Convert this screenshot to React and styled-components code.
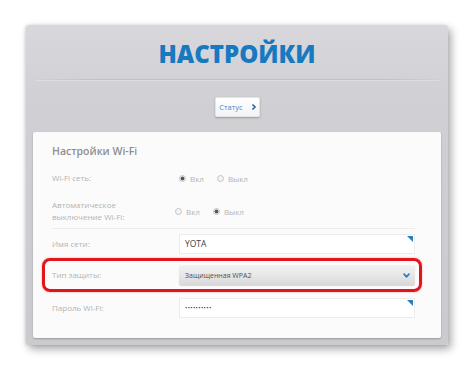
import React from "react";
import styled, { createGlobalStyle } from "styled-components";

const GlobalStyle = createGlobalStyle`
  * { box-sizing: border-box; }
  body {
    margin: 0;
    background: #ffffff;
    font-family: "Open Sans", "Liberation Sans", sans-serif;
  }
`;

const Page = styled.div`
  width: 474px;
  height: 373px;
  padding: 25px 0 0 26px;
`;

const Panel = styled.div`
  width: 422px;
  height: 320px;
  border-radius: 3px 3px 2px 2px;
  background: linear-gradient(180deg, #d8d8dc 0%, #d0d0d4 25%, #cbcbcf 100%);
  box-shadow: 3px 4px 8px rgba(0, 0, 0, 0.35), -1px 0 3px rgba(0, 0, 0, 0.12);
  display: flex;
  flex-direction: column;
  padding: 0 7px 7px 7px;
`;

const Header = styled.div`
  height: 54px;
  display: flex;
  align-items: center;
  justify-content: center;
  padding-top: 2px;
`;

const Title = styled.h1`
  margin: 0;
  font-family: "Open Sans", sans-serif;
  font-weight: 800;
  font-size: 24px;
  letter-spacing: 0;
  color: #1779c0;
`;

const Divider = styled.div`
  height: 2px;
  margin: 0 2px;
  background: linear-gradient(
    90deg,
    rgba(185, 185, 190, 0.1),
    #bfbfc4 15%,
    #bfbfc4 85%,
    rgba(185, 185, 190, 0.1)
  );
  border-bottom: 1px solid #dddde1;
`;

const Nav = styled.div`
  display: flex;
  justify-content: center;
  padding: 16px 0 15px 0;
`;

const StatusButton = styled.button`
  width: 45px;
  height: 20px;
  display: flex;
  align-items: center;
  justify-content: center;
  gap: 8px;
  padding: 0 0 0 2px;
  background: linear-gradient(180deg, #ffffff, #f3f3f5);
  border: 1px solid #e4e4e8;
  border-radius: 2px;
  box-shadow: 0 1px 2px rgba(0, 0, 0, 0.25);
  font-family: "Open Sans", sans-serif;
  font-size: 7.5px;
  color: #4f86bd;
`;

const Card = styled.div`
  flex: 1;
  background: #fbfbfb;
  border-radius: 2px;
  box-shadow: 0 1px 2px rgba(0, 0, 0, 0.25);
  padding: 8px 26px 14px 19px;
  display: flex;
  flex-direction: column;
`;

const CardTitle = styled.h2`
  margin: 0;
  height: 22px;
  line-height: 22px;
  font-size: 10.5px;
  font-weight: 600;
  color: #8e8e8e;
`;

const Row = styled.div`
  height: ${(p) => p.h}px;
  display: flex;
  align-items: center;
  border-bottom: ${(p) => (p.divided ? "1px solid #ececec" : "none")};
`;

const MarkedRow = styled.div`
  height: 34px;
  display: flex;
  align-items: center;
  margin: 0 -7px 0 -10px;
  padding: 0 4px 0 7px;
  border: 3px solid #e3141b;
  border-radius: 8px;
  box-shadow: 0 0 2px rgba(200, 0, 0, 0.4);
`;

const Label = styled.div`
  width: 127px;
  flex-shrink: 0;
  font-size: 8px;
  line-height: 12px;
  color: #b3b3b3;
`;

const RadioGroup = styled.div`
  display: flex;
  align-items: center;
  gap: 13px;
  margin-left: ${(p) => p.shift || 0}px;
`;

const RadioOption = styled.label`
  display: flex;
  align-items: center;
  gap: 4px;
  font-size: 8px;
  color: #b3b3b3;
`;

const RadioDot = styled.span`
  width: 7px;
  height: 7px;
  border-radius: 50%;
  border: 1px solid #c4c4c4;
  background: ${(p) =>
    p.checked
      ? "radial-gradient(circle, #555 0, #555 1.6px, #e9e9e9 2.2px)"
      : "#f4f4f4"};
`;

const Field = styled.div`
  position: relative;
  width: 236px;
  height: 20px;
  display: flex;
  align-items: center;
  padding-left: 5px;
  background: #ffffff;
  border: 1px solid #ececec;
  font-size: 8.5px;
  color: #3e3e3e;
`;

const Corner = styled.span`
  position: absolute;
  top: 1px;
  right: 1px;
  width: 0;
  height: 0;
  border-top: 6px solid #2d7fb3;
  border-left: 6px solid transparent;
`;

const Select = styled.div`
  width: 236px;
  height: 20px;
  display: flex;
  align-items: center;
  justify-content: space-between;
  padding: 0 5px 0 6px;
  background: linear-gradient(180deg, #f2f2f2 0%, #e6e6e6 55%, #d9d9d9 100%);
  border-radius: 2px;
  box-shadow: 0 1px 1px rgba(0, 0, 0, 0.15);
  font-size: 7px;
  color: #505050;
`;

const Dots = styled.span`
  font-size: 6px;
  letter-spacing: 0.4px;
  color: #333;
`;

const Radio = ({ checked, children }) => (
  <RadioOption>
    <RadioDot checked={checked} />
    {children}
  </RadioOption>
);

const Chevron = ({ color, size = 6, down }) => (
  <svg
    width={size}
    height={size}
    viewBox="0 0 10 10"
    style={{ transform: down ? "rotate(90deg)" : "none" }}
  >
    <path
      d="M3 1.5 L7 5 L3 8.5"
      fill="none"
      stroke={color}
      strokeWidth="2.4"
      strokeLinecap="round"
      strokeLinejoin="round"
    />
  </svg>
);

const App = () => {
  return (
    <Page>
      <GlobalStyle />
      <Panel>
        <Header>
          <Title>НАСТРОЙКИ</Title>
        </Header>
        <Divider />
        <Nav>
          <StatusButton>
            Статус
            <Chevron color="#25609a" size={6} />
          </StatusButton>
        </Nav>
        <Card>
          <CardTitle>Настройки Wi-Fi</CardTitle>
          <Row h={32}>
            <Label>Wi-Fi сеть:</Label>
            <RadioGroup shift={0}>
              <Radio checked>Вкл</Radio>
              <Radio>Выкл</Radio>
            </RadioGroup>
          </Row>
          <Row h={35} divided>
            <Label>
              Автоматическое
              <br />
              выключение Wi-Fi:
            </Label>
            <RadioGroup shift={-4}>
              <Radio>Вкл</Radio>
              <Radio checked>Выкл</Radio>
            </RadioGroup>
          </Row>
          <Row h={29}>
            <Label>Имя сети:</Label>
            <Field>
              YOTA
              <Corner />
            </Field>
          </Row>
          <MarkedRow>
            <Label>Тип защиты:</Label>
            <Select>
              Защищенная WPA2
              <Chevron color="#2a7fc0" size={7} down />
            </Select>
          </MarkedRow>
          <Row h={32}>
            <Label>Пароль Wi-Fi:</Label>
            <Field>
              <Dots>••••••••••</Dots>
              <Corner />
            </Field>
          </Row>
        </Card>
      </Panel>
    </Page>
  );
};

export default App;
